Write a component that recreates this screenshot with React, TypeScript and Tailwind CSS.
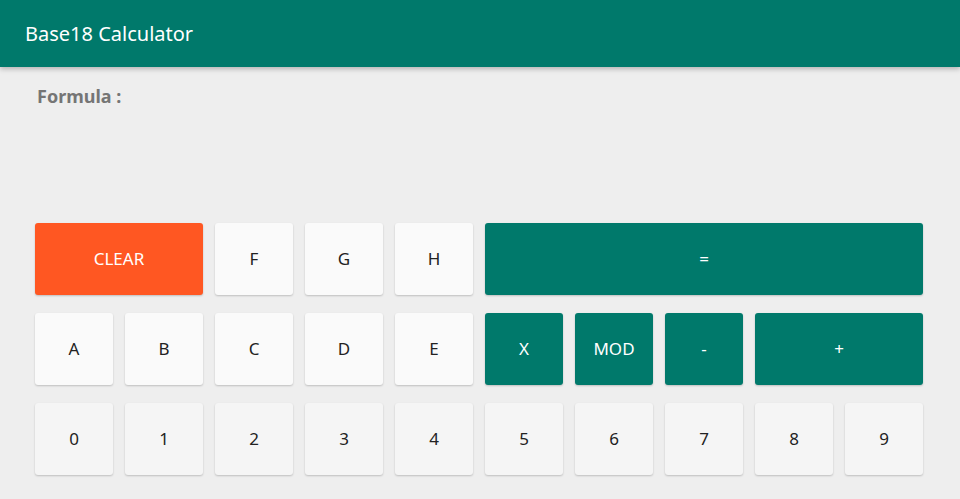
type Key = { label: string; span?: string; tone: 'clear' | 'teal' | 'light' | 'digit' };

const keys: Key[] = [
  { label: 'CLEAR', span: 'col-span-2', tone: 'clear' },
  { label: 'F', tone: 'light' },
  { label: 'G', tone: 'light' },
  { label: 'H', tone: 'light' },
  { label: '=', span: 'col-span-5', tone: 'teal' },
  { label: 'A', tone: 'light' },
  { label: 'B', tone: 'light' },
  { label: 'C', tone: 'light' },
  { label: 'D', tone: 'light' },
  { label: 'E', tone: 'light' },
  { label: 'X', tone: 'teal' },
  { label: 'MOD', tone: 'teal' },
  { label: '-', tone: 'teal' },
  { label: '+', span: 'col-span-2', tone: 'teal' },
  ...['0', '1', '2', '3', '4', '5', '6', '7', '8', '9'].map((d) => ({ label: d, tone: 'digit' as const })),
];

const toneClass = {
  clear: 'bg-[#ff5722] text-white',
  teal: 'bg-[#00796b] text-white',
  light: 'bg-[#fafafa] text-[#222]',
  digit: 'bg-[#f5f5f5] text-[#222]',
};

export default function App() {
  return (
    <div className="h-[499px] w-[960px] overflow-hidden bg-[#eeeeee] font-['Noto_Sans',sans-serif]">
      <header className="relative z-10 flex h-[67px] items-center bg-[#00796b] pl-[25px] shadow-[0_2px_5px_rgba(0,0,0,0.25)]">
        <h1 className="text-[20px] text-white">Base18 Calculator</h1>
      </header>

      <div className="px-[35px]">
        <div className="pl-[2px] pt-[16px] text-[18px] font-bold text-[#757575]">Formula :</div>

        <div className="mt-[113px] grid grid-cols-[repeat(10,78px)] gap-x-[12px] gap-y-[18px]">
          {keys.map((key) => (
            <button
              key={key.label}
              className={`${key.span ?? ''} ${toneClass[key.tone]} flex h-[72px] items-center justify-center rounded-[3px] text-[17px] shadow-[0_1px_2px_rgba(0,0,0,0.2)]`}
            >
              {key.label}
            </button>
          ))}
        </div>
      </div>
    </div>
  );
}
